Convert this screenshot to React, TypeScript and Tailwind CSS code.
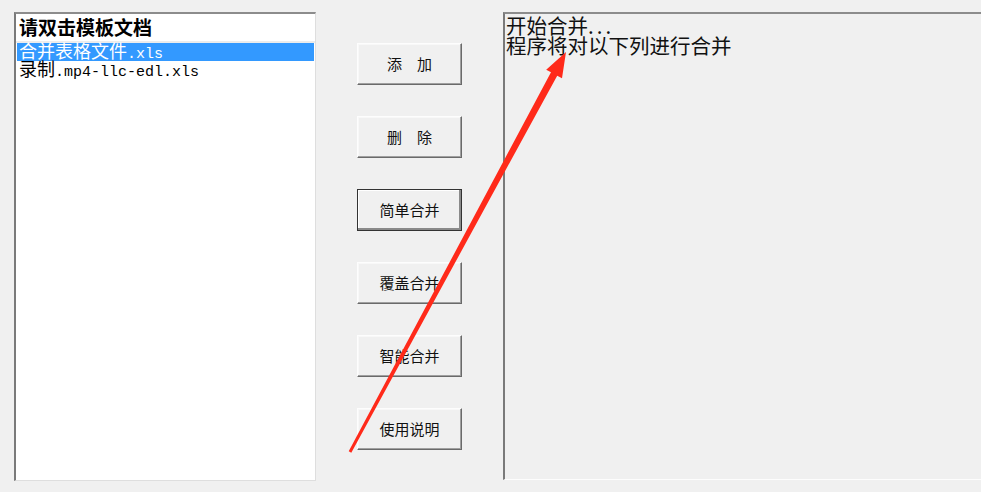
import React from "react";

const cjk = '"Noto Sans CJK SC", "Noto Sans", sans-serif';
const mono = '"Liberation Mono", "Noto Sans CJK SC", monospace';

function FileName({ cn, ext }: { cn: string; ext: string }) {
  return (
    <span className="whitespace-nowrap">
      <span className="text-[18px]" style={{ fontFamily: cjk }}>
        {cn}
      </span>
      <span className="text-[15px]" style={{ fontFamily: mono }}>
        {ext}
      </span>
    </span>
  );
}

function ClassicButton({ label, focused }: { label: string; focused?: boolean }) {
  return (
    <button
      className={`w-[105px] h-[42px] bg-[#f0f0f0] text-[15px] text-[#111] flex items-center justify-center ${
        focused
          ? "border border-[#333] shadow-[inset_-2px_-2px_0_#8a8a8a,inset_1px_1px_0_#ffffff]"
          : "border border-t-[#fdfdfd] border-l-[#fdfdfd] border-b-[#6a6a6a] border-r-[#6a6a6a] shadow-[inset_-1px_-1px_0_#a0a0a0,inset_1px_1px_0_#f8f8f8]"
      }`}
      style={{ fontFamily: cjk }}
    >
      {label}
    </button>
  );
}

export default function App() {
  const buttons = ["添\u3000加", "删\u3000除", "简单合并", "覆盖合并", "智能合并", "使用说明"];

  return (
    <div className="relative w-[981px] h-[492px] overflow-hidden bg-[#f0f0f0] flex pt-[12px] pl-[14px]">
      {/* template list */}
      <div className="shrink-0 w-[302px] h-[469px] flex flex-col bg-white border-t-2 border-l-2 border-t-[#8c8c8c] border-l-[#7a7a7a] border-r border-b border-r-[#dedede] border-b-[#dedede]">
        <div
          className="h-[29px] px-[3px] text-[19px] font-bold leading-[26px] text-black border-b-2 border-b-[#ececec]"
          style={{ fontFamily: cjk }}
        >
          请双击模板文档
        </div>
        <div className="flex flex-col px-px">
          <div className="h-[18px] bg-[#3399ff] text-white px-[2px] leading-[16px] flex items-center">
            <FileName cn="合并表格文件" ext=".xls" />
          </div>
          <div className="h-[18px] text-black px-[2px] leading-[16px] flex items-center">
            <FileName cn="录制" ext=".mp4-llc-edl.xls" />
          </div>
        </div>
      </div>

      {/* actions */}
      <div className="shrink-0 ml-[41px] mt-[31px] flex flex-col gap-[31px]">
        {buttons.map((b, i) => (
          <ClassicButton key={b} label={b} focused={i === 2} />
        ))}
      </div>

      {/* log */}
      <div
        className="shrink-0 ml-[41px] w-[490px] h-[468px] bg-[#f0f0f0] border-t-2 border-l-2 border-t-[#8c8c8c] border-l-[#7a7a7a] border-b border-b-[#fdfdfd] px-px pt-px text-[20.5px] leading-[20px] text-[#111]"
        style={{ fontFamily: cjk }}
      >
        <div>
          开始合并<span className="tracking-[3px]">...</span>
        </div>
        <div>程序将对以下列进行合并</div>
      </div>

      {/* annotation arrow */}
      <svg className="absolute inset-0 pointer-events-none" width="981" height="492" viewBox="0 0 981 492">
        <polygon
          points="348.7,451.3 551,72.3 546.2,69.7 566,52 562,78.3 557.2,75.7 351.3,452.7"
          fill="#ff2a1a"
        />
      </svg>
    </div>
  );
}
